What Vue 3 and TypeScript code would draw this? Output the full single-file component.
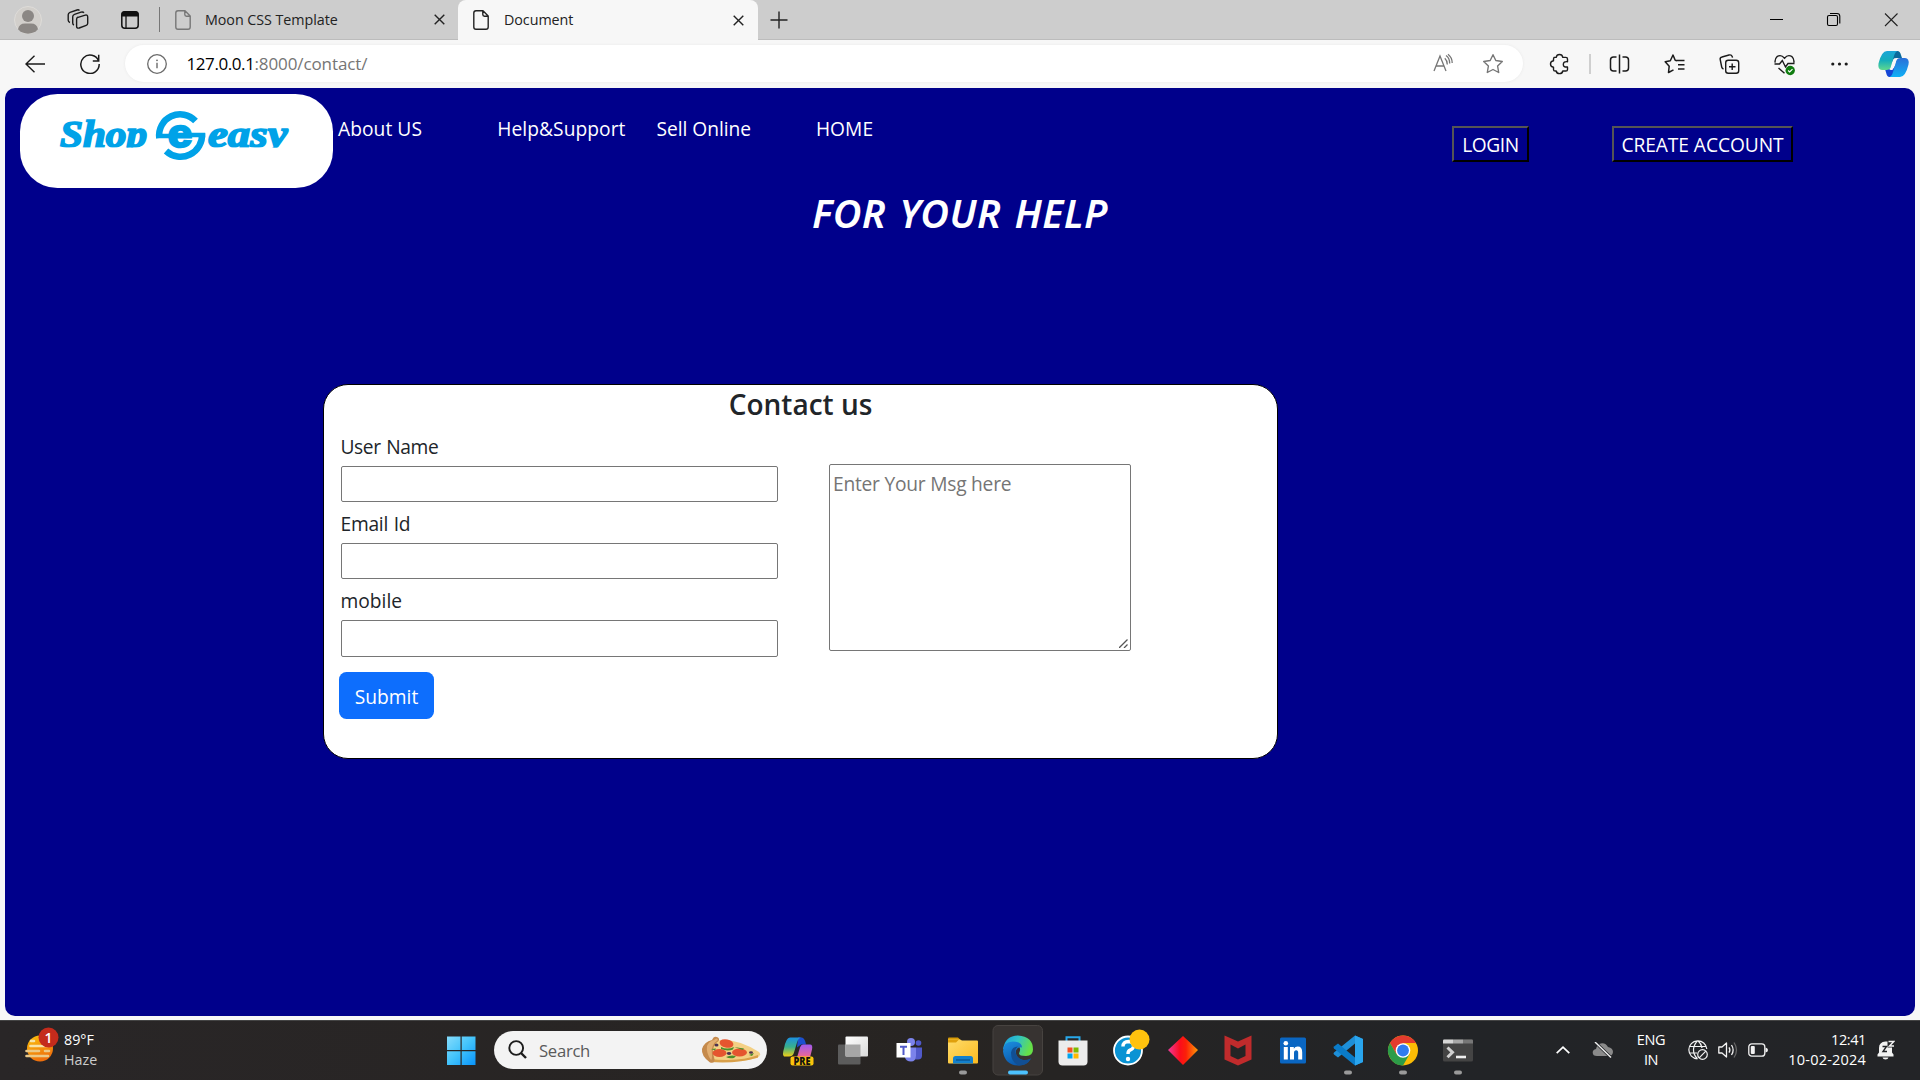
<script setup lang="ts">
interface Field {
  label: string
  cls: string
}

const fields: Field[] = [
  { label: 'User Name', cls: 'tight' },
  { label: 'Email Id', cls: 'snug' },
  { label: 'mobile', cls: 'last' },
]
</script>

<template>
  <div class="screen">
    <header class="tabs">
      <svg class="profile" viewBox="-14 -14 28 28"><circle r="13.5" fill="#d2cfcb" stroke="#dedcd9" /><circle cy="-4" r="6" fill="#8b8784" /><path d="M-10 9.3Q-9 3.5-3 3.5H3Q9 3.5 10 9.3A13.5 13.5 0 0 1-10 9.3Z" fill="#8b8784" /></svg>
      <svg class="spaces" viewBox="0 0 22 22"><g fill="none" stroke="#1b1b1b" stroke-width="1.4" stroke-linejoin="round"><path d="M10.2 8.6L18.3 6.1Q20.7 5.6 20.7 8V14.2Q20.7 15.8 19.2 16.3L12.2 19Q9.6 19.7 9.6 17.2V10.2Q9.6 8.9 10.6 8.5Z" /><path d="M17 3.8Q16 2.5 14 3.2L7.5 5.4Q5.7 6 5.7 7.8V14Q5.7 15.6 7 16" /><path d="M12.5 1.4Q11.5.5 10 1L3 3.4Q1.2 4 1.2 5.8V11.3Q1.2 13 3 13.5" /></g></svg>
      <svg class="tabact" viewBox="0 0 18 18"><rect x=".8" y=".8" width="16.4" height="16.4" rx="3" fill="none" stroke="#111" stroke-width="1.5" /><path d="M.5 3.5Q.5.3 3.5.3H14.5Q17.5.3 17.5 3.5V5.5H.5Z" fill="#111" /><path d="M5 5V17" stroke="#111" stroke-width="1.3" /></svg>
      <i class="sep"></i>
      <div class="tab idle">
        <svg class="file" viewBox="0 0 16 20"><path d="M10 .8H3Q.8.8.8 3V17Q.8 19.2 3 19.2H13Q15.2 19.2 15.2 17V6ZM9.8 1V4.5Q9.8 6.2 11.5 6.2H15" fill="none" stroke="#777" stroke-width="1.4" stroke-linejoin="round" /></svg>
        <span>Moon CSS Template</span>
        <svg class="x" viewBox="0 0 11 11"><path d="M.7.7L10.3 10.3M10.3.7L.7 10.3" stroke="#222" stroke-width="1.4" /></svg>
      </div>
      <div class="tab active">
        <svg class="file" viewBox="0 0 16 20"><path d="M10 .8H3Q.8.8.8 3V17Q.8 19.2 3 19.2H13Q15.2 19.2 15.2 17V6ZM9.8 1V4.5Q9.8 6.2 11.5 6.2H15" fill="none" stroke="#222" stroke-width="1.4" stroke-linejoin="round" /></svg>
        <span>Document</span>
        <svg class="x" viewBox="0 0 11 11"><path d="M.7.7L10.3 10.3M10.3.7L.7 10.3" stroke="#222" stroke-width="1.4" /></svg>
      </div>
      <svg class="plus" viewBox="0 0 18 18"><path d="M9 .5V17.5M.5 9H17.5" stroke="#222" stroke-width="1.4" /></svg>
      <div class="winctl">
        <svg viewBox="-28 -20 56 40"><path d="M-6.5-.5H6.5" stroke="#000" /></svg>
        <svg viewBox="-28 -20 56 40"><g fill="none" stroke="#000" stroke-width="1.1"><rect x="-6" y="-4.5" width="10" height="10" rx="1.5" /><path d="M-3.5-6.5H3.5Q6.3-6.5 6.3-3.7V3.5" /></g></svg>
        <svg viewBox="-28 -20 56 40"><path d="M-5.5-6.5L7 6M7-6.5L-5.5 6" stroke="#222" stroke-width="1.1" /></svg>
      </div>
    </header>

    <div class="toolbar">
      <svg class="back" viewBox="0 0 20 18"><path d="M20 9H1M9.5.8L1 9L9.5 17.2" fill="none" stroke="#1b1b1b" stroke-width="1.4" /></svg>
      <svg class="reload" viewBox="0 0 20 20"><path d="M18.6 7A9.2 9.2 0 1 0 19.2 10M18.7.8V6.9H12.8" fill="none" stroke="#1b1b1b" stroke-width="1.5" /></svg>
      <div class="address">
        <svg class="info" viewBox="0 0 20 20"><circle cx="10" cy="10" r="9.3" fill="none" stroke="#6b6b6b" stroke-width="1.3" /><path d="M10 8.8V14.3" stroke="#6b6b6b" stroke-width="1.4" /><circle cx="10" cy="6.3" r=".9" fill="#6b6b6b" /></svg>
        <span class="url"><b>127.0.0.1</b><span>:8000/contact/</span></span>
        <svg class="ab" viewBox="-25 -18.5 50 37"><g fill="none" stroke="#767676" stroke-width="1.3"><path d="M-9 7.5L-3-7.5L3 7.5M-6.8 2.5H.8" /><path d="M1.8-5.3Q4.3-3 4.3 1M3-8Q6.7-5.5 6.7 0M5-9.3Q9.2-6 9.2-.5" /></g></svg>
        <svg class="ab" viewBox="-25 -18.5 50 37"><path d="M0-8.8L2.8-3L9.3-2L4.6 2.5L5.7 9L0 6L-5.7 9L-4.6 2.5L-9.3-2L-2.8-3Z" fill="none" stroke="#767676" stroke-width="1.4" stroke-linejoin="round" /></svg>
      </div>
      <svg class="tb ext" viewBox="-27.5 -24 55 48"><path d="M-5.5-6.6H-3.3Q-2.8-9.5 0-9.5Q2.8-9.5 3.3-6.6H6.3Q8-6.6 8-5V-2.3Q3.8-2.8 3.8.4Q3.8 3.5 8 3V5.4Q8 7 6.3 7H3.3Q2.8 9.6 0 9.6Q-2.8 9.6-3.3 7H-4.2Q-6 7-6 5.4V3.2Q-9 2.8-9 0Q-9-2.7-6-3.2V-5Q-6-6.6-4.5-6.6Z" fill="none" stroke="#1b1b1b" stroke-width="1.4" stroke-linejoin="round" /></svg>
      <i class="sep light"></i>
      <svg class="tb" viewBox="-27.5 -24 55 48"><path d="M-3-7H-6Q-9-7-9-4V4Q-9 7-6 7H-3M3-7H6Q9-7 9-4V4Q9 7 6 7H3M0-9.5V9.5" fill="none" stroke="#1b1b1b" stroke-width="1.5" /></svg>
      <svg class="tb" viewBox="-27.5 -24 55 48"><path d="M2.5-3.2L.7-3.7L-1.5-9L-4.2-3.2L-9.3-2.2L-5.3 2.2L-6 8.5L-1 5.8M2.3-3.5H10M3.5.8H10M3.5 5H10" fill="none" stroke="#1b1b1b" stroke-width="1.5" stroke-linejoin="round" /></svg>
      <svg class="tb" viewBox="-27.5 -24 55 48"><g fill="none" stroke="#1b1b1b" stroke-width="1.4"><rect x="-3.8" y="-3.7" width="13" height="13" rx="2.5" /><path d="M2.7-.5V6M-.5 2.8H6M-6 5Q-7.5 4.5-7.8 3L-9.3-4.5Q-9.7-6.5-7.5-7L-.5-9Q2-9.6 2.8-7.3L3-6.3" /></g></svg>
      <svg class="tb" viewBox="-27.5 -24 55 48"><g fill="none" stroke="#1b1b1b" stroke-width="1.4"><path d="M-9.3-1.3Q-10-5-7.5-7.3Q-3.5-10 0-5.8Q3.5-10 7.5-7.3Q10-5 9.3-1.3M-6 4L0 9.3M-10 0H-5L-2.2-3.5L1 3L3.5-.5H10" /></g><circle cx="5.7" cy="6.5" r="4.7" fill="#107c10" /><path d="M3.6 6.5L5.2 8L8 5.2" fill="none" stroke="#fff" stroke-width="1.2" /></svg>
      <svg class="tb" viewBox="-27.5 -24 55 48"><g fill="#1b1b1b"><circle cx="-6.7" r="1.6" /><circle r="1.6" /><circle cx="6.7" r="1.6" /></g></svg>
      <svg class="tb cop" viewBox="-26.5 -24 53 48">
        <defs><linearGradient id="c1" x1="0" y1="0" x2="0" y2="1"><stop offset="0" stop-color="#1aa5d8" /><stop offset=".5" stop-color="#15aebb" /><stop offset="1" stop-color="#5fd88e" /></linearGradient><linearGradient id="c2" x1="0" y1="0" x2="0" y2="1"><stop offset="0" stop-color="#2a6fd8" /><stop offset="1" stop-color="#10b0f5" /></linearGradient></defs>
        <path d="M0-13H4Q6.5-13 7.5-9L8.5-6H3Q-1-6-2 0Z" fill="#0a6a9c" /><path d="M0 13H-4Q-6.5 13-7.3 9L-8.5 5H-2Q1 5 2 0Z" fill="#1546d6" />
        <path d="M-6.5-13H4Q1.5-12 .5-8L-3 4Q-4 6-7 6H-11.5Q-16 6-15-.5Q-12-13-6.5-13Z" fill="url(#c1)" /><path d="M6.5 13H-4Q-1.5 12-.5 8L3-4Q4-6 7-6H11.5Q16-6 15 .5Q12 13 6.5 13Z" fill="url(#c2)" /><path d="M.5-5.5H3.5L-1 6H-4.5Q-3 5.5-2.5 4Z" fill="#f7f7f7" /></svg>
    </div>

    <div class="frame">
      <main class="page">
        <nav class="nav">
          <svg class="logo" viewBox="20 94 313 94">
            <clipPath id="lc"><rect x="50" y="100" width="260" height="47.6" /></clipPath>
            <g fill="#00a2e8" stroke="#00a2e8" clip-path="url(#lc)" font-family="'Liberation Serif', serif" font-weight="700" font-style="italic" stroke-width="1.7">
              <text x="60" y="147" font-size="37" textLength="87" lengthAdjust="spacingAndGlyphs">Shop</text>
              <text x="208" y="147" font-size="38" textLength="79.5" lengthAdjust="spacingAndGlyphs">easy</text>
            </g>
            <g fill="none" stroke="#00a2e8" stroke-width="6.5"><path d="M159.3 138A21 21 0 0 1 195.5 121" /><path d="M202 133.5A21.5 21.5 0 0 1 166 151" /><path d="M156 136H172M188 135H205.2" stroke-width="4.5" /></g>
            <text x="168" y="146.5" font-size="38" font-family="'Liberation Sans', sans-serif" font-weight="700" fill="#00a2e8" stroke="#00a2e8" stroke-width="2.5" textLength="24" lengthAdjust="spacingAndGlyphs">e</text>
          </svg>
          <div class="links"><a>About US</a><a>Help&amp;Support</a><a class="sell">Sell Online</a><a>HOME</a></div>
          <button class="login">LOGIN</button>
          <button class="create">CREATE ACCOUNT</button>
        </nav>
        <h1>FOR YOUR HELP</h1>
        <section class="card">
          <h2>Contact us</h2>
          <div class="cols">
            <form class="form">
              <label v-for="f in fields" :key="f.label" :class="f.cls"><span>{{ f.label }}</span><input type="text" /></label>
              <button class="submit" type="button">Submit</button>
            </form>
            <div class="msg"><span>Enter Your Msg here</span><svg viewBox="0 0 9 9"><path d="M0 9L8.5.5M5 9L8.5 5.5" stroke="#555" stroke-width="1.3" /></svg></div>
          </div>
        </section>
      </main>
    </div>

    <footer class="taskbar">
      <div class="weather">
        <svg viewBox="0 0 36 36"><defs><linearGradient id="sun" x1="0" y1="0" x2=".4" y2="1"><stop offset="0" stop-color="#fcc40c" /><stop offset="1" stop-color="#ee6f0c" /></linearGradient></defs><circle cx="16" cy="21.5" r="13" fill="url(#sun)" /><g stroke="#f7e3a8" stroke-width="2.6" stroke-linecap="round"><path d="M7 14H10M6.5 19H24" /><path d="M2.5 24H15M21 24H25M2.5 29H24" stroke="#ecc987" /></g><circle cx="24.5" cy="10.5" r="10" fill="#c42b1c" /><text x="24.5" y="15.5" text-anchor="middle" font-family="'Open Sans', sans-serif" font-size="14" font-weight="600" fill="#fff">1</text></svg>
        <div class="wtxt"><span>89°F</span><em>Haze</em></div>
      </div>
      <svg class="t" viewBox="-28 -30.5 55 60"><defs><linearGradient id="win" gradientUnits="userSpaceOnUse" x1="-14" y1="-14" x2="14" y2="14"><stop offset="0" stop-color="#86dcfb" /><stop offset=".5" stop-color="#42c3fb" /><stop offset="1" stop-color="#0a95fb" /></linearGradient></defs><path d="M-14-14H-.5V-.5H-14ZM.7-14H14.5V-.5H.7ZM-14 .7H-.5V14.5H-14ZM.7 .7H14.5V14.5H.7Z" fill="url(#win)" /></svg>
      <div class="search">
        <svg class="mag" viewBox="0 0 20 20"><circle cx="8.2" cy="8" r="6.9" fill="none" stroke="#1c1c1c" stroke-width="1.9" /><path d="M13 13L18 18" stroke="#1c1c1c" stroke-width="2.4" /></svg>
        <span>Search</span>
        <svg class="pizza" viewBox="0 0 60 30"><path d="M5 8Q30-1 58 17Q61 20 56 23Q40 28 9 26Z" fill="#f3d084" /><path d="M8 24Q40 27 57 20L57 22.5Q36 29 9 27Z" fill="#d9a04a" /><path d="M11 5Q13 0 17 2.5Q20 5 15 8Q10 14 13 22Q15 29 9 27.5Q0 21 1 14Q3 7 11 5Z" fill="#c58a4c" /><path d="M13 5Q16 2 17 5Q9 10 11 20Q11 25 10 25Q5 18 6 11Q8 6 13 5Z" fill="#e2ae70" /><g fill="#e5552f"><ellipse cx="25.5" cy="8.5" rx="7" ry="4.2" transform="rotate(12 25.5 8.5)" /><ellipse cx="18.5" cy="18" rx="7" ry="4" /><ellipse cx="38.5" cy="17.5" rx="7.5" ry="4" /></g><g fill="#4d8f2a"><path d="M20 12Q26 15 33 12L32 14.5Q26 16.5 20 14ZM25 22Q30 19.5 35 21L33 23Q28 24 25 22ZM33 12L43 13.5L42 15ZM48 20L53 18L51 21ZM10 14L15 13.5L14 15.5Z" /></g><g fill="#4b3050"><ellipse cx="15.5" cy="10" rx="2" ry="1.5" /><ellipse cx="28" cy="18.5" rx="2.2" ry="1.4" /><ellipse cx="50" cy="17.5" rx="2" ry="1.3" /></g></svg>
      </div>
      <svg class="t first" viewBox="-28 -30.5 55 60"><defs><linearGradient id="p1" x1="0" y1="0" x2="0" y2="1"><stop offset="0" stop-color="#1c90e0" /><stop offset=".5" stop-color="#38b08c" /><stop offset="1" stop-color="#f2cf14" /></linearGradient><linearGradient id="p2" x1="0" y1="0" x2="0" y2="1"><stop offset="0" stop-color="#a05af0" /><stop offset="1" stop-color="#f2688c" /></linearGradient></defs><path d="M0-13H4Q7-12 8-6H3L-1-3Z" fill="#1c4fd0" /><path d="M-8-13H3Q0-12-1-8L-4 2Q-5 6-9 6H-14Q-16 4-14-2Q-12-13-8-13Z" fill="url(#p1)" /><path d="M5-6H12Q15-6 14-1L12 7H-1L2-3Q3-6 5-6Z" fill="url(#p2)" /><rect x="-7.5" y="6" width="23" height="9" rx="2" fill="#fbc30c" /><text x="4" y="14.2" text-anchor="middle" font-family="'Open Sans', sans-serif" font-size="10.2" font-weight="800" textLength="17" lengthAdjust="spacingAndGlyphs" fill="#111">PRE</text></svg>
      <svg class="t" viewBox="-28 -30.5 55 60"><defs><linearGradient id="tv" x1="0" y1="0" x2="1" y2="1"><stop offset="0" stop-color="#fff" /><stop offset="1" stop-color="#d9d9d9" /></linearGradient></defs><rect x="-15" y="-6" width="22.5" height="20" rx="1" fill="#5c5c5c" /><rect x="-7.5" y="-14" width="22.5" height="20" rx="1" fill="url(#tv)" /><path d="M-7.5-6H7.5V6H-7.5Z" fill="#a6a6a6" /></svg>
      <svg class="t" viewBox="-27 -30.5 55 60"><circle cx="4" cy="-8.5" r="4" fill="#7b83eb" /><circle cx="11.5" cy="-7.5" r="2.8" fill="#5059c9" /><path d="M9-3H15V5Q15 9 11 9H8Z" fill="#5059c9" /><path d="M-4-3H9V5Q9 11 4 11Q-1 11-2 7Z" fill="#7b83eb" /><rect x="-10.5" y="-7.5" width="14" height="14.5" fill="#fff" /><path d="M-7-3.7H0M-3.5-3.7V4.5" stroke="#5059c9" stroke-width="2" /></svg>
      <svg class="t" viewBox="-28 -30.5 55 60"><defs><linearGradient id="fo" x1="0" y1="0" x2="1" y2="1"><stop offset="0" stop-color="#ffdc6a" /><stop offset="1" stop-color="#fbba20" /></linearGradient></defs><path d="M-15-12Q-15-13-14-13H-5L-2-10H-15Z" fill="#d89b06" /><path d="M-15-11H-3L-1-10H14Q15-10 15-9V12Q15 13 14 13H-14Q-15 13-15 12Z" fill="url(#fo)" /><path d="M-15-11H-4L-7-8H-15Z" fill="#e0a00c" /><path d="M-10 13V8Q-10 5.5-7.5 5.5H7.5Q10 5.5 10 8V13Z" fill="#1380cc" /><path d="M-7 9.5H7" stroke="#0a4d8a" stroke-width="1.2" /><rect x="-4" y="20" width="8" height="4" rx="2" fill="#9a9a9a" /></svg>
      <svg class="t" viewBox="-28 -30.5 55 60"><defs><linearGradient id="e1" x1="0" y1="0" x2="1" y2=".3"><stop offset="0" stop-color="#1a9be0" /><stop offset=".5" stop-color="#2fc3c8" /><stop offset="1" stop-color="#66e048" /></linearGradient><linearGradient id="e2" x1="0" y1="0" x2=".5" y2="1"><stop offset="0" stop-color="#1b8fe0" /><stop offset="1" stop-color="#0b55a8" /></linearGradient></defs><rect x="-25" y="-25" width="49.5" height="49.5" rx="5" fill="#373331" stroke="#474340" /><path d="M-15-1Q-13-15 0-15Q15-14 15-1Q15 5 8 5.5Q1 5.5 1 3Q4-3-1-7Q-8-8-15-1Z" fill="url(#e1)" /><path d="M-15 1Q-15-9-5-9Q4-9 4-3Q0-4-2 0Q-3 6 3 9Q8 11 13 8Q9 15 1 15Q-13 15-15 1Z" fill="url(#e2)" /><path d="M-7 2Q-6-4 0-4Q-3-2-2.5 2Q-1 8 5 9.5Q9 10 13 8Q9 15 1 15Q-7 12-7 2Z" fill="#124f93" /><rect x="-10" y="20" width="20" height="4" rx="2" fill="#4cc2ff" /></svg>
      <svg class="t" viewBox="-28 -30.5 55 60"><path d="M-6.5-9V-13.3H6.5V-9" fill="none" stroke="#28a8ea" stroke-width="2" /><path d="M-14.5-10H14.5V11Q14.5 15 10.5 15H-10.5Q-14.5 15-14.5 11Z" fill="#ececec" /><path d="M-5.5-3H-.5V2H-5.5Z" fill="#f25022" /><path d="M.5-3H5.5V2H.5Z" fill="#7fba00" /><path d="M-5.5 3H-.5V8H-5.5Z" fill="#00a4ef" /><path d="M.5 3H5.5V8H.5Z" fill="#ffb900" /></svg>
      <svg class="t" viewBox="-28 -30.5 55 60"><circle r="14" fill="#0a93d4" stroke="#fff" stroke-width="1.8" /><path d="M-5-4Q-5-9 .5-9Q6-8.5 5.5-4Q5-1.5 2-.3Q0 .5 0 3.5" fill="none" stroke="#fff" stroke-width="3.4" /><circle cy="8.5" r="2.2" fill="#fff" /><circle cx="11.5" cy="-11" r="10" fill="#ffc20e" /></svg>
      <svg class="t" viewBox="-28 -30.5 55 60"><defs><linearGradient id="di"><stop offset="0" stop-color="#ee3a9a" /><stop offset=".4" stop-color="#fb0d1c" /><stop offset=".6" stop-color="#fb2008" /><stop offset="1" stop-color="#fb9a08" /></linearGradient></defs><path d="M0-14.5L15-.5L0 14.5L-15-.5Z" fill="url(#di)" /></svg>
      <svg class="t" viewBox="-28 -30.5 55 60"><path d="M-13.5-15L0-9L13.5-15V9L0 15L-13.5 9ZM-7.5-6V5.5L0 9L7.5 5.5V-6L0-2Z" fill="#c02b2c" fill-rule="evenodd" /></svg>
      <svg class="t" viewBox="-28 -30.5 55 60"><rect x="-13" y="-13" width="26" height="26" rx="1.5" fill="#0a66c2" /><circle cx="-7.2" cy="-7.2" r="2.3" fill="#fff" /><path d="M-9.2-3.5H-5.2V9H-9.2ZM-3-3.5H.8V-1.8Q2-3.9 4.8-3.9Q9.2-3.9 9.2 1.7V9H5.2V2.5Q5.2-.3 3.2-.3Q1 -.3 1 2.5V9H-3Z" fill="#fff" /></svg>
      <svg class="t" viewBox="-28 -30.5 55 60"><path d="M7-15L15-11.5V11.5L7 15L7-7L-10 7L-14 4Q-15 3-14 2Z" fill="#1e8fd8" /><path d="M7 15L-14-2Q-15-3-14-4L-10-7L7 7Z" fill="#0a7bc8" /><path d="M7-15L15-11.5V11.5L7 15Z" fill="#29a5ee" /><rect x="-4" y="20" width="8" height="4" rx="2" fill="#9a9a9a" /></svg>
      <svg class="t" viewBox="-28 -30.5 55 60"><circle r="15" fill="#fbbc05" /><path d="M-13-7.5A15 15 0 0 1 13-7.5H0L-6.5 3.7Z" fill="#e33b2e" /><path d="M-13-7.5A15 15 0 0 0 0 15L6.5 3.7L-6.5 3.7Z" fill="#2c9c48" /><circle r="7.3" fill="#fff" /><circle r="5.9" fill="#2f7bee" /><rect x="-4" y="20" width="8" height="4" rx="2" fill="#9a9a9a" /></svg>
      <svg class="t" viewBox="-28 -30.5 55 60"><rect x="-15" y="-11" width="30" height="22" rx="1.5" fill="#444" /><path d="M-15-7V-10Q-15-11-14-11H-5V-7Z" fill="#d6d6d6" /><path d="M-5-11H5V-7H-5Z" fill="#a8a8a8" /><path d="M5-11H14Q15-11 15-10V-7H5Z" fill="#777" /><path d="M-10.5-3L-5.5 1.8L-10.5 6.8" fill="none" stroke="#d0d0d0" stroke-width="3" /><path d="M-2 6.5H8" stroke="#eee" stroke-width="2.6" /><rect x="-4" y="20" width="8" height="4" rx="2" fill="#9a9a9a" /></svg>
      <div class="tray">
        <svg class="chev" viewBox="0 0 14 8"><path d="M.7 7.2L7 1.2L13.3 7.2" fill="none" stroke="#fff" stroke-width="1.7" /></svg>
        <svg class="cloud" viewBox="0 0 22 16"><path d="M5 14Q.7 14 .7 10.5Q.7 7.5 4 7Q5 1.5 10 1.2Q14 1 16 5Q21 6 21 10Q20.5 14 17 14Z" fill="#8a8a8a" /><path d="M3 0L19 15.5" stroke="#222427" stroke-width="3" /><path d="M3 0L19 15.5" stroke="#f0f0f0" stroke-width="1.4" /></svg>
        <div class="lang"><span>ENG</span><span>IN</span></div>
        <svg class="net" viewBox="0 0 20 20"><g fill="none" stroke="#f2f2f2" stroke-width="1.2"><path d="M9.5 18.8A9 9 0 1 1 18.8 9M1.5 6.5H18M1.5 13H9M9.5.8Q5.5 5 5.5 10T9.5 18.8M10 .8Q13.5 4 14 8" /><circle cx="14.5" cy="14.5" r="4.8" /><path d="M11.2 17.8L17.8 11.2" /></g></svg>
        <svg class="vol" viewBox="0 0 20 18"><g fill="none" stroke="#f2f2f2" stroke-width="1.3"><path d="M.8 6H4L8.5 2V16L4 12H.8Z" stroke-linejoin="round" /><path d="M11 6.3Q12.8 9 11 11.7M13.5 4Q16.8 9 13.5 14" /><path d="M16 1.5Q21 9 16 16.5" stroke="#666" /></g></svg>
        <svg class="bat" viewBox="0 0 20 14"><rect x=".8" y=".8" width="16" height="12.4" rx="3" fill="none" stroke="#f2f2f2" stroke-width="1.3" /><rect x="2.8" y="3" width="4" height="8" rx="1" fill="#f2f2f2" /><path d="M17.5 4.5Q20 5 20 7T17.5 9.5Z" fill="#f2f2f2" /></svg>
        <div class="clock"><span class="time">12:41</span><span class="date">10-02-2024</span></div>
        <svg class="bell" viewBox="0 0 18 20"><path d="M.5 16.5V14.5L2 12.5V8Q2 2 8.5 1.5H10.5V7.5H15V12.5L16.5 14.5V16.5ZM5.5 17.5H11.5Q11 19.5 8.5 19.5T5.5 17.5Z" fill="#f2f2f2" /><path d="M11.5 1.5H16.8L12.5 6H17" fill="none" stroke="#f2f2f2" stroke-width="1.5" /><path d="M5.5 6.5H9.5L6 11.5H10" fill="none" stroke="#222427" stroke-width="1.4" /></svg>
      </div>
    </footer>
  </div>
</template>

<style>
body { margin: 0; overflow: hidden; }
</style>

<style scoped>
* { box-sizing: border-box; }
svg { display: block; flex: none; }
span, b, em, a, button { white-space: nowrap; }
.screen { width: 1920px; height: 1080px; display: flex; flex-direction: column; background: #f7f7f7; font-family: "Open Sans", "Noto Sans", sans-serif; overflow: hidden; }

.tabs { height: 40px; display: flex; align-items: center; background: #cdcdcd; flex: none; border-bottom: 1px solid #bcbcbc; }
.profile { width: 28px; height: 28px; margin-left: 14px; }
.spaces { width: 22px; height: 22px; margin-left: 25px; }
.tabact { width: 18px; height: 18px; margin: 1px 0 0 32px; }
.sep { width: 1px; height: 25px; background: #777; margin-left: 20px; flex: none; }
.tab { display: flex; height: 40px; align-items: center; font-size: 14.3px; color: #222; }
.tab .x { width: 11px; height: 11px; margin-left: auto; }
.file { width: 16px; height: 20px; }
.tab span { margin-left: 14px; line-height: 20px; letter-spacing: -0.05px; }
.idle { width: 298px; padding: 0 13px 0 15px; }
.active { width: 300px; background: #f7f7f7; padding: 0 14px 0 15px; border-radius: 8px 8px 0 0; margin-bottom: -1px; }
.active span { margin-left: 15px; }
.plus { width: 18px; height: 18px; margin-left: 12px; }
.winctl { display: flex; margin: 0 1px 0 auto; }
.winctl svg { width: 57px; height: 40px; }

.toolbar { height: 47px; display: flex; align-items: center; flex: none; }
.back { width: 20px; height: 18px; margin-left: 25px; }
.reload { width: 20px; height: 20px; margin-left: 35px; }
.address { width: 1398px; height: 37px; margin-left: 25px; border-radius: 19px; background: #fff; display: flex; align-items: center; padding: 0 5px 0 22px; box-shadow: 0 0 3px #e8e8e8; }
.info { width: 20px; height: 20px; }
.url { margin: 1px auto 0 19.5px; font-size: 17px; line-height: 24px; color: #757575; letter-spacing: -0.1px; }
.url b { font-weight: 400; color: #000; letter-spacing: -0.42px; }
.ab { width: 50px; height: 37px; }
.tb { width: 55px; height: 48px; }
.ext { margin-left: 9px; }
.sep.light { width: 2px; height: 20px; background: #cfcfcf; margin: 0 1px 0 2px; }
.cop { width: 53px; }

.frame { height: 933px; padding: 1px 5px 4px; flex: none; }
.page { height: 928px; border-radius: 10px; background: #00008b; overflow: hidden; color: #fff; }
.nav { display: flex; padding: 6px 0 0 15px; height: 100px; align-items: flex-start; font-size: 19.2px; }
.logo { width: 313px; height: 94px; border-radius: 37.5px; background: #fff; }
.links { display: flex; margin: 20px auto 0 5px; line-height: 30px; letter-spacing: 0.06px; }
.links a { width: 159.3px; }
.links .sell { letter-spacing: -0.05px; }
.nav button { height: 36px; margin-top: 32px; border: 2px solid; border-color: #555 #000 #000 #555; background: none; color: #fff; font: 19.2px/30px "Open Sans", sans-serif; padding: 1px 0 0; }
.nav .login { width: 77px; letter-spacing: -0.4px; }
.nav .create { width: 181px; margin: 32px 122px 0 83px; letter-spacing: -0.08px; }
h1 { margin: 1px 0 0; text-align: center; font: italic 600 39.5px/48px "Noto Sans", sans-serif; height: 195px; letter-spacing: 0.45px; word-spacing: 2.5px; }
.card { width: 955px; height: 375px; margin-left: 318px; border: 1px solid #000; border-radius: 25px; background: #fff; color: #212529; font-size: 19.2px; }
h2 { margin: 0; text-align: center; font: 600 28px/38px "Open Sans", sans-serif; height: 47px; }
.cols { display: flex; align-items: flex-start; }
.form { width: 505px; padding-left: 17px; }
.form label { display: block; height: 77px; line-height: 30px; }
.form label span { display: block; width: max-content; height: 34px; margin-left: -0.5px; }
.tight { letter-spacing: -0.4px; word-spacing: 1px; }
.snug { letter-spacing: -0.25px; word-spacing: 1px; }
input { display: block; width: 437px; height: 36px; border: 1px solid #767676; border-radius: 2px; padding: 0; margin: 0; }
.last input { height: 37px; }
.submit { width: 95px; height: 47px; margin: 9px 0 0 -2px; border: 0; border-radius: 7.5px; background: #0d6efd; color: #fff; font: 19.2px/45px "Open Sans", sans-serif; padding: 2px 0 0; }
.msg { width: 302px; height: 187px; margin-top: 32px; border: 1px solid #767676; border-radius: 2px; color: #757575; padding: 4px 3px; line-height: 30px; letter-spacing: -0.23px; position: relative; }
.msg svg { position: absolute; right: 2px; bottom: 2px; width: 9px; height: 9px; }

.taskbar { height: 60px; flex: none; display: flex; align-items: center; background: linear-gradient(90deg, #292627, #272422 50%, #222427 75%, #232427); border-top: 1px solid #444; padding-bottom: 1px; color: #fff; }
.weather { display: flex; width: 433px; padding-left: 24px; align-items: center; }
.weather svg { width: 36px; height: 36px; margin-top: -10px; }
.wtxt { display: flex; flex-direction: column; margin: -1px 0 0 4px; font-size: 14.3px; line-height: 20px; }
em { font-style: normal; color: #ccc; }
.t { width: 55px; height: 60px; }
.search { width: 273px; height: 38px; border-radius: 19px; background: #f3f3f3; margin-left: 6px; display: flex; align-items: center; color: #5a5a5a; font-size: 16.7px; letter-spacing: -0.3px; padding: 0 6px 0 14px; }
.mag { width: 20px; height: 20px; }
.search span { margin: 0 auto 0 11px; }
.pizza { width: 60px; height: 30px; }
.first { margin-left: 3px; }
.tray { margin-left: auto; display: flex; align-items: center; font-size: 14.5px; line-height: 20px; }
.chev { width: 14px; height: 8px; }
.cloud { width: 22px; height: 16px; margin-left: 22px; }
.lang { width: 30px; margin-left: 22px; display: flex; flex-direction: column; align-items: center; letter-spacing: -0.4px; }
.net { width: 20px; height: 20px; margin-left: 22px; }
.vol { width: 20px; height: 18px; margin-left: 10px; }
.bat { width: 20px; height: 14px; margin-left: 10px; }
.clock { width: 78px; margin: -1px 0 0 20px; display: flex; flex-direction: column; align-items: flex-end; }
.time { letter-spacing: -0.4px; }
.date { letter-spacing: 0.2px; }
.bell { width: 18px; height: 20px; margin: 0 25px 0 11px; }
</style>
